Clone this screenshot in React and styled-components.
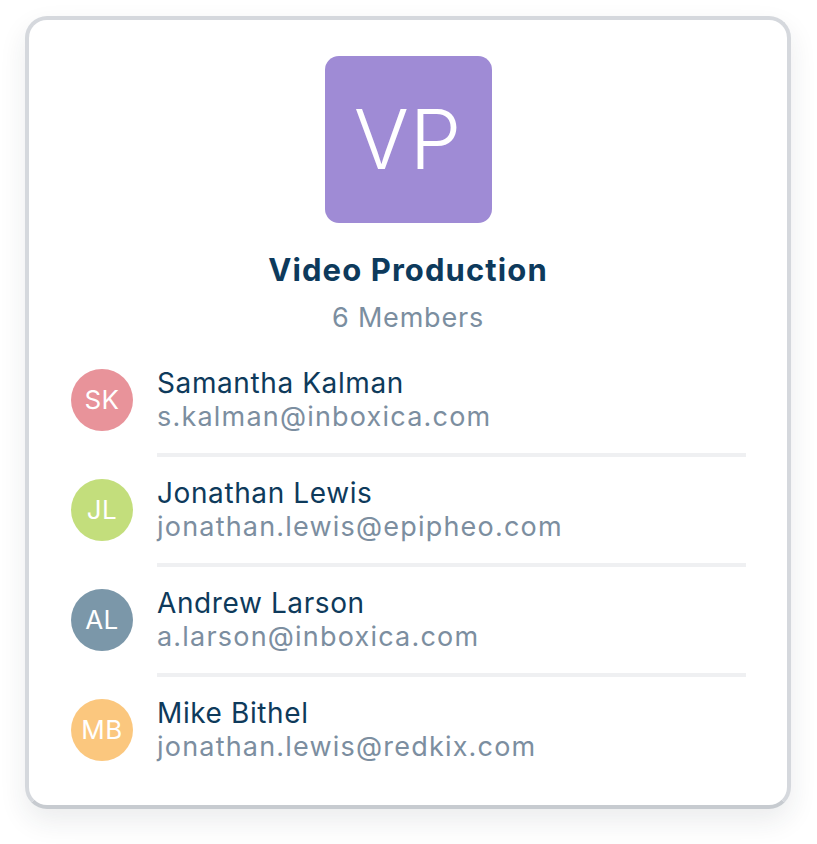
import React from 'react'
import styled, { createGlobalStyle } from 'styled-components'

const GlobalStyle = createGlobalStyle`
  html, body {
    margin: 0;
    padding: 0;
    background: #ffffff;
  }
  * {
    box-sizing: border-box;
  }
`

const Page = styled.div`
  width: 817px;
  height: 844px;
  padding: 16px 26px 0 25px;
  font-family: Inter, "Open Sans", sans-serif;
`

const Card = styled.section`
  width: 766px;
  height: 793px;
  border: 4px solid #d5d8dd;
  border-bottom-color: #c7cbd0;
  border-radius: 22px;
  background: #ffffff;
  box-shadow: 0 12px 28px rgba(30, 40, 60, 0.09);
  display: flex;
  flex-direction: column;
  align-items: center;
  padding-top: 36px;
`

const GroupTile = styled.div`
  width: 167px;
  height: 167px;
  border-radius: 14px;
  background: #9f8bd5;
  color: #ffffff;
  display: flex;
  align-items: center;
  justify-content: center;
  font-size: 82px;
  font-weight: 300;
  letter-spacing: 1px;
`

const Title = styled.h1`
  margin: 29px 0 0;
  font-size: 31px;
  line-height: 36px;
  font-weight: 700;
  letter-spacing: 1.1px;
  color: #0d3a5c;
`

const Subtitle = styled.div`
  margin-top: 14px;
  font-size: 27px;
  line-height: 32px;
  letter-spacing: 0.8px;
  color: #7b8ea0;
`

const MemberList = styled.ul`
  list-style: none;
  margin: 13px 0 0;
  padding: 0 41px 0 42px;
  width: 100%;
`

const Row = styled.li`
  display: flex;
  align-items: center;
  gap: 24px;
`

const Avatar = styled.div`
  flex: none;
  width: 62px;
  height: 62px;
  margin-bottom: 5px;
  border-radius: 50%;
  background: ${p => p.$color};
  color: #ffffff;
  display: flex;
  align-items: center;
  justify-content: center;
  font-size: 26px;
  letter-spacing: 0.5px;
`

const Info = styled.div`
  flex: 1;
  padding: 19px 0;
  border-bottom: 4px solid ${p => (p.$last ? 'transparent' : '#eff0f2')};
`

const Name = styled.div`
  font-size: 28px;
  line-height: 34px;
  color: #0e3a5b;
  letter-spacing: 0.6px;
`

const Email = styled.div`
  font-size: 27px;
  line-height: 34px;
  color: #7c8ea0;
  letter-spacing: 1.2px;
`

const members = [
  { initials: 'SK', name: 'Samantha Kalman', email: 's.kalman@inboxica.com', color: '#e8939a' },
  { initials: 'JL', name: 'Jonathan Lewis', email: 'jonathan.lewis@epipheo.com', color: '#c3de7c' },
  { initials: 'AL', name: 'Andrew Larson', email: 'a.larson@inboxica.com', color: '#7b97a9' },
  { initials: 'MB', name: 'Mike Bithel', email: 'jonathan.lewis@redkix.com', color: '#fbc77e' },
]

const App = () => {
  return (
    <Page>
      <GlobalStyle />
      <Card>
        <GroupTile>VP</GroupTile>
        <Title>Video Production</Title>
        <Subtitle>6 Members</Subtitle>
        <MemberList>
          {members.map((m, i) => (
            <Row key={m.initials}>
              <Avatar $color={m.color}>{m.initials}</Avatar>
              <Info $last={i === members.length - 1}>
                <Name>{m.name}</Name>
                <Email>{m.email}</Email>
              </Info>
            </Row>
          ))}
        </MemberList>
      </Card>
    </Page>
  )
}

export default App
